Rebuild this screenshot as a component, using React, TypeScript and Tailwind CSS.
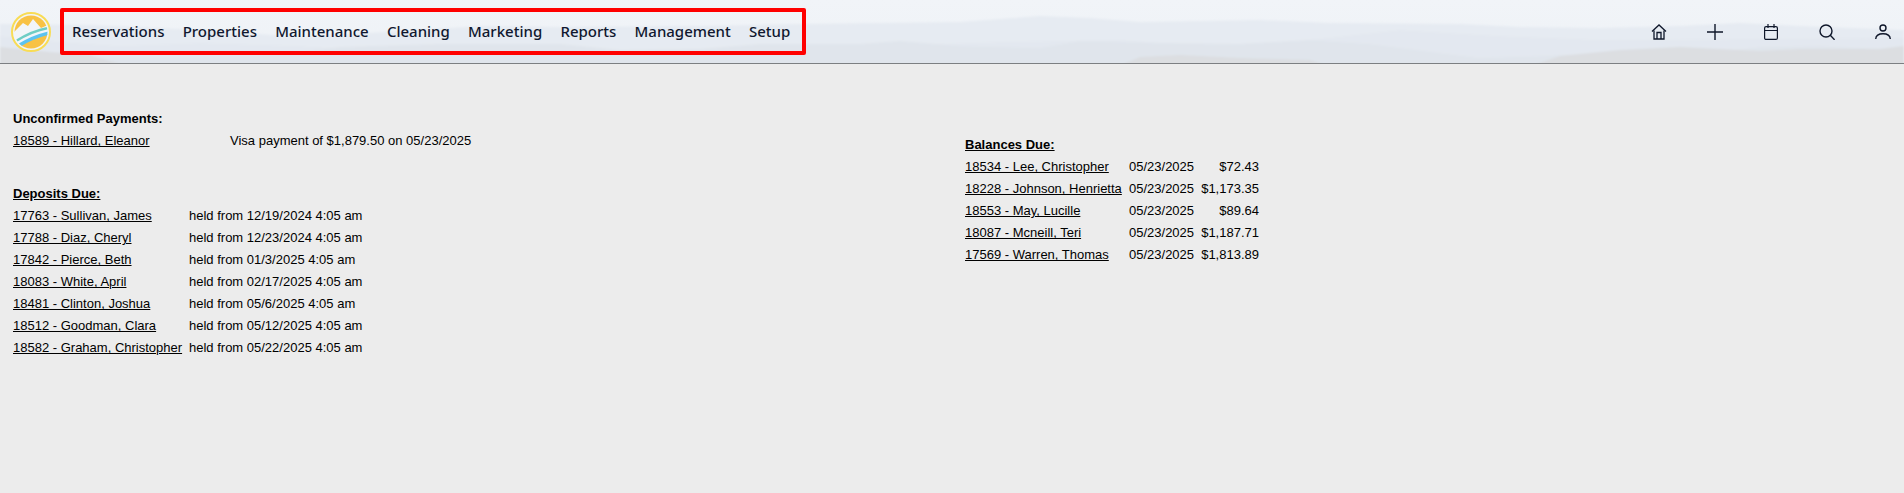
const navItems = ["Reservations", "Properties", "Maintenance", "Cleaning", "Marketing", "Reports", "Management", "Setup"];

const deposits = [
  ["17763 - Sullivan, James", "held from 12/19/2024 4:05 am"],
  ["17788 - Diaz, Cheryl", "held from 12/23/2024 4:05 am"],
  ["17842 - Pierce, Beth", "held from 01/3/2025 4:05 am"],
  ["18083 - White, April", "held from 02/17/2025 4:05 am"],
  ["18481 - Clinton, Joshua", "held from 05/6/2025 4:05 am"],
  ["18512 - Goodman, Clara", "held from 05/12/2025 4:05 am"],
  ["18582 - Graham, Christopher", "held from 05/22/2025 4:05 am"],
];

const balances = [
  ["18534 - Lee, Christopher", "05/23/2025", "$72.43"],
  ["18228 - Johnson, Henrietta", "05/23/2025", "$1,173.35"],
  ["18553 - May, Lucille", "05/23/2025", "$89.64"],
  ["18087 - Mcneill, Teri", "05/23/2025", "$1,187.71"],
  ["17569 - Warren, Thomas", "05/23/2025", "$1,813.89"],
];

function Mountains() {
  return (
    <svg className="absolute inset-0 h-[63px] w-full" viewBox="0 0 1904 63" preserveAspectRatio="none">
      <defs>
        <linearGradient id="sky" x1="0" y1="0" x2="0" y2="1">
          <stop offset="0" stopColor="#f1f4f8" />
          <stop offset="1" stopColor="#eef2f6" />
        </linearGradient>
        <filter id="soft" x="-1%" y="-10%" width="102%" height="120%">
          <feGaussianBlur stdDeviation="1" />
        </filter>
      </defs>
      <rect width="1904" height="63" fill="url(#sky)" />
      <g filter="url(#soft)">
        <path
          d="M0 24 L90 25 L200 30 L300 37 L420 30 L480 26 L560 27 L700 26 L800 24 L880 23 L960 22 L1000 19 L1040 16 L1090 18 L1140 22 L1260 20 L1330 23 L1460 24 L1520 27 L1600 28 L1680 26 L1740 23 L1800 26 L1904 30 L1904 70 L0 70 Z"
          fill="#e6ebf2"
        />
        <path
          d="M0 36 L60 42 L120 46 L200 43 L300 46 L360 50 L880 50 L940 44 L1000 42 L1120 40 L1200 46 L1300 41 L1400 30 L1500 36 L1600 40 L1904 38 L1904 70 L0 70 Z"
          fill="#e3e8f0"
        />
        <path
          d="M0 52 L40 57 L250 56 L300 52 L340 47 L440 44 L560 44 L620 50 L700 49 L760 44 L860 44 L900 41 L960 46 L1040 48 L1080 41 L1160 43 L1240 44 L1310 40 L1370 44 L1440 53 L1480 58 L1570 55 L1640 58 L1700 54 L1760 47 L1820 46 L1880 49 L1904 47 L1904 70 L0 70 Z"
          fill="#e0e5ec"
        />
        <path
          d="M0 47 L50 52 L90 55 L140 70 L0 70 Z M1110 70 L1140 57 L1180 55 L1240 58 L1310 60 L1340 70 Z M1520 70 L1560 56 L1620 50 L1680 47 L1760 51 L1800 49 L1880 49 L1904 46 L1904 70 Z"
          fill="#dcdee1"
        />
      </g>
    </svg>
  );
}

function Logo() {
  return (
    <svg width="42" height="42" viewBox="0 0 42 42" className="shrink-0">
      <defs>
        <clipPath id="disc">
          <circle cx="21" cy="21" r="16.5" />
        </clipPath>
      </defs>
      <circle cx="21" cy="21" r="19" fill="#f2f5f8" stroke="#f8dc55" strokeWidth="2" />
      <g clipPath="url(#disc)">
        <path d="M3 22 L13 12 L18 15 L23 8 L31 17 L40 13 L40 0 L3 0 Z" fill="#f8c244" />
        <path d="M3 42 L3 36 L40 22 L40 42 Z" fill="#f8c244" />
        <path d="M6 30 Q22 20 38 17" fill="none" stroke="#6fcdc4" strokeWidth="2.5" />
        <path d="M8 35 Q22 26 39 22" fill="none" stroke="#5cc3f0" strokeWidth="3.5" />
      </g>
    </svg>
  );
}

function HeaderIcons() {
  return (
    <div className="ml-auto flex items-center gap-[40px] pr-[13px] text-[#0f172a]">
      <svg width="16" height="16" viewBox="0 0 16 16" fill="none" stroke="currentColor" strokeWidth="1.3">
        <path d="M1 7.5 L8 1 L15 7.5" />
        <path d="M3 6.5 V15 H13 V6.5" />
        <path d="M6 15 V8.5 H10 V15" />
      </svg>
      <svg width="16" height="16" viewBox="0 0 16 16" fill="none" stroke="currentColor" strokeWidth="1.4">
        <path d="M8 0 V16 M0 8 H16" />
      </svg>
      <svg width="16" height="16" viewBox="0 0 16 16" fill="none" stroke="currentColor" strokeWidth="1.2">
        <rect x="1.6" y="2.6" width="12.8" height="12.8" rx="1.5" />
        <path d="M1.6 6.5 H14.4 M5 0 V4 M11 0 V4" />
      </svg>
      <svg width="16" height="16" viewBox="0 0 16 16" fill="none" stroke="currentColor" strokeWidth="1.4">
        <circle cx="7" cy="7" r="6" />
        <path d="M11.3 11.3 L15.6 15.8" />
      </svg>
      <svg width="16" height="16" viewBox="0 0 16 16" fill="none" stroke="currentColor" strokeWidth="1.4">
        <circle cx="8" cy="4" r="3" />
        <path d="M0.7 15 C1 11 4.5 9.8 8 9.8 C11.5 9.8 15 11 15.3 15" />
      </svg>
    </div>
  );
}

function Link({ children }: { children: string }) {
  return <a className="text-black underline">{children}</a>;
}

export default function App() {
  return (
    <div className="min-h-[493px] bg-[#ececec] font-['Liberation_Sans',Arial,sans-serif] text-[13px] text-black">
      {/* Header */}
      <div className="relative h-[64px] border-b border-[#7c7f82]">
        <Mountains />
        <div className="relative flex h-[63px] items-center pl-[10px]">
          <Logo />
          <nav className="ml-[8px] flex h-[47px] w-[746px] items-center gap-[18.2px] rounded-[2px] border-4 border-[#ff0000] pl-[8px] font-['Noto_Sans','Open_Sans',sans-serif] text-[15px] font-medium text-[#10182f]">
            {navItems.map((item) => (
              <span key={item}>{item}</span>
            ))}
          </nav>
          <HeaderIcons />
        </div>
      </div>

      {/* Content */}
      <div className="flex pl-[13px] pt-[44px]">
        <div className="w-[952px]">
          <div className="flex h-[22px] items-center font-bold">Unconfirmed Payments:</div>
          <div className="grid h-[22px] grid-cols-[217px_1fr] items-center">
            <Link>18589 - Hillard, Eleanor</Link>
            <span>Visa payment of $1,879.50 on 05/23/2025</span>
          </div>
          <div className="mt-[31px] flex h-[22px] items-center font-bold underline">Deposits Due:</div>
          <div className="grid auto-rows-[22px] grid-cols-[176px_1fr] items-center">
            {deposits.map(([name, held]) => (
              <div key={name} className="contents">
                <Link>{name}</Link>
                <span>{held}</span>
              </div>
            ))}
          </div>
        </div>
        <div className="pt-[26px]">
          <div className="flex h-[22px] items-center font-bold underline">Balances Due:</div>
          <div className="grid auto-rows-[22px] grid-cols-[164px_67px_63px] items-center">
            {balances.map(([name, date, amount]) => (
              <div key={name} className="contents">
                <Link>{name}</Link>
                <span>{date}</span>
                <span className="text-right">{amount}</span>
              </div>
            ))}
          </div>
        </div>
      </div>
    </div>
  );
}
